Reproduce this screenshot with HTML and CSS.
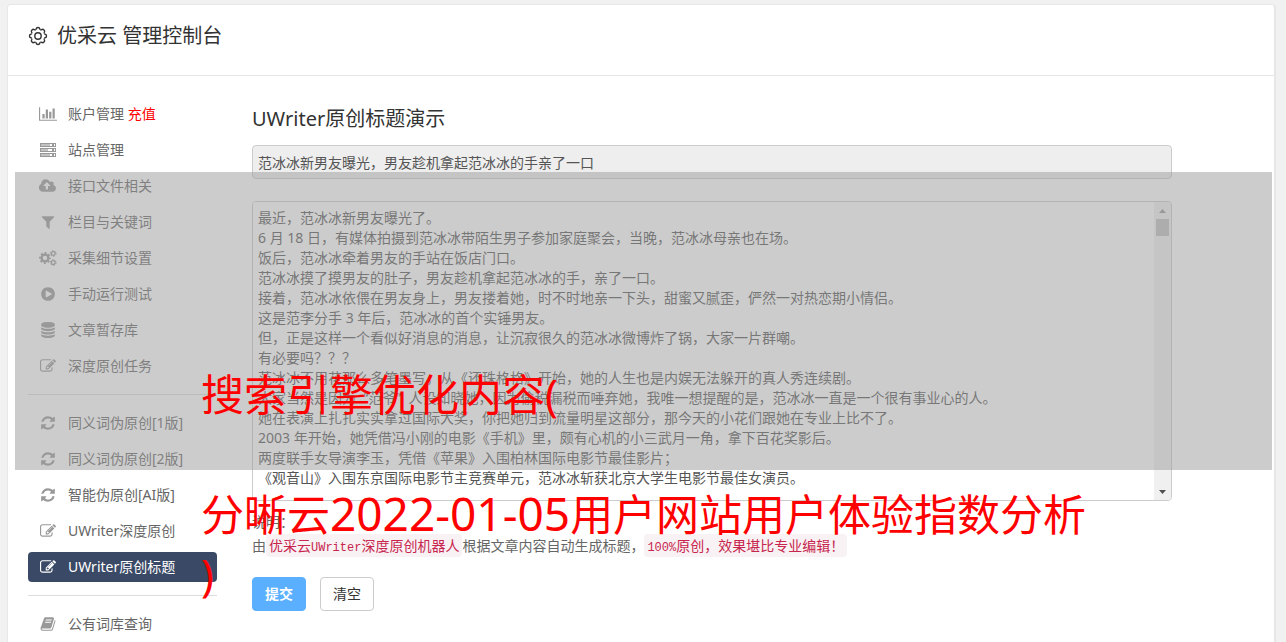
FILE: index.html
```html
<!DOCTYPE html>
<html lang="zh-CN">
<head>
<meta charset="utf-8">
<meta name="viewport" content="width=device-width, initial-scale=1">
<title>优采云 管理控制台</title>
<link rel="stylesheet" href="styles.css">
</head>
<body>
<svg class="symbols" aria-hidden="true">
  <symbol id="i-chart" viewBox="0 0 2048 1792"><path d="M640 896v512h-256v-512h256zm384-512v1024h-256v-1024h256zm1024 1152v128h-2048v-1536h128v1408h1920zm-640-896v768h-256v-768h256zm384-384v1152h-256v-1152h256z"/></symbol>
  <symbol id="i-server" viewBox="0 0 16 16"><g fill="none" stroke="currentColor"><rect x=".5" y="1.5" width="15" height="3"/><rect x=".5" y="6.5" width="15" height="3"/><rect x=".5" y="11.500" width="15" height="3"/></g><path opacity=".6" d="M1 2h9v2H1zM1 7h7v2H1zM1 12h9v2H1z"/><path d="M12 2h2v2h-2zM12 7h2v2h-2zM12 12h2v2h-2z"/></symbol>
  <symbol id="i-cloud" viewBox="0 0 1920 1792"><path d="M1216 864q0-14-9-23l-352-352q-9-9-23-9t-23 9l-351 351q-10 12-10 24 0 14 9 23t23 9h224v352q0 13 9.500 22.500t22.500 9.500h192q13 0 22.500-9.500t9.500-22.500v-352h224q13 0 22.500-9.500t9.500-22.500zm640 288q0 159-112.500 271.500t-271.500 112.500h-1088q-185 0-316.500-131.500t-131.500-316.500q0-130 70-240t188-165q-2-30-2-43 0-212 150-362t362-150q156 0 285.500 87t188.500 231q71-62 166-62 106 0 181 75t75 181q0 76-41 138 130 31 213.500 135.500t83.500 238.500z"/></symbol>
  <symbol id="i-filter" viewBox="0 0 1792 1792"><path d="M1595 295q17 41-14 70l-493 493v742q0 42-39 59-13 5-25 5-27 0-45-19l-256-256q-19-19-19-45v-486l-493-493q-31-29-14-70 17-39 59-39h1280q42 0 59 39z"/></symbol>
  <symbol id="i-cogs" viewBox="0 0 18 16"><g fill="none" stroke="currentColor"><circle cx="6" cy="8" r="3.400" stroke-width="2.400"/><circle cx="6" cy="8" r="5" stroke-width="1.800" stroke-dasharray="1.960" stroke-dashoffset=".98"/><circle cx="14.200" cy="3.500" r="1.900" stroke-width="1.300"/><circle cx="14.200" cy="3.500" r="2.900" stroke-width="1" stroke-dasharray="1.520"/><circle cx="14.200" cy="12.500" r="1.900" stroke-width="1.300"/><circle cx="14.200" cy="12.500" r="2.900" stroke-width="1" stroke-dasharray="1.520"/></g></symbol>
  <symbol id="i-play" viewBox="0 0 1792 1792"><path d="M896 128q209 0 385.500 103t279.500 279.500 103 385.500-103 385.500-279.500 279.500-385.500 103-385.500-103-279.500-279.500-103-385.500 103-385.500 279.500-279.500 385.500-103zm384 823q32-18 32-55t-32-55l-544-320q-31-19-64-1-32 19-32 56v640q0 37 32 56 16 8 32 8 17 0 32-9z"/></symbol>
  <symbol id="i-db" viewBox="0 0 1792 1792"><path d="M896 768q237 0 443-43t325-127v170q0 69-103 128t-280 93.500-385 34.500-385-34.500-280-93.500-103-128v-170q119 84 325 127t443 43zm0 768q237 0 443-43t325-127v170q0 69-103 128t-280 93.500-385 34.500-385-34.500-280-93.500-103-128v-170q119 84 325 127t443 43zm0-384q237 0 443-43t325-127v170q0 69-103 128t-280 93.500-385 34.500-385-34.500-280-93.500-103-128v-170q119 84 325 127t443 43zm0-1152q208 0 385 34.500t280 93.500 103 128v128q0 69-103 128t-280 93.500-385 34.500-385-34.500-280-93.500-103-128v-128q0-69 103-128t280-93.500 385-34.500z"/></symbol>
  <symbol id="i-edit" viewBox="0 0 1792 1792"><path d="M888 1184l116-116-152-152-116 116v56h96v96h56zm440-720q-16-16-33 1l-350 350q-17 17-1 33t33-1l350-350q17-17 1-33zm80 594v190q0 119-84.500 203.500t-203.500 84.500h-832q-119 0-203.500-84.500t-84.500-203.500v-832q0-119 84.500-203.500t203.500-84.500h832q63 0 117 25 15 7 18 23 3 17-9 29l-49 49q-14 14-32 8-23-6-45-6h-832q-66 0-113 47t-47 113v832q0 66 47 113t113 47h832q66 0 113-47t47-113v-126q0-13 9-22l64-64q15-15 35-7t20 29zm-96-738l288 288-672 672h-288v-288zm444 132l-92 92-288-288 92-92q28-28 68-28t68 28l152 152q28 28 28 68t-28 68z"/></symbol>
  <symbol id="i-refresh" viewBox="0 0 1792 1792"><path d="M1639 1056q0 5-1 7-64 268-268 434.500t-478 166.500q-146 0-282.500-55t-243.500-157l-129 129q-19 19-45 19t-45-19-19-45v-448q0-26 19-45t45-19h448q26 0 45 19t19 45-19 45l-137 137q71 66 161 102t187 36q134 0 250-65t186-179q11-17 53-117 8-23 30-23h192q13 0 22.500 9.500t9.500 22.500zm25-800v448q0 26-19 45t-45 19h-448q-26 0-45-19t-19-45 19-45l138-138q-148-137-349-137-134 0-250 65t-186 179q-11 17-53 117-8 23-30 23h-199q-13 0-22.500-9.500t-9.500-22.500v-7q65-268 270-434.500t480-166.500q146 0 284 55.500t245 156.500l130-129q19-19 45-19t45 19 19 45z"/></symbol>
  <symbol id="i-book" viewBox="0 0 1792 1792"><path d="M1703 478q40 57 18 129l-275 906q-19 64-76.500 107.500t-122.500 43.500h-923q-77 0-148.500-53.500t-99.500-131.500q-24-67-2-127 0-4 3-27t4-37q1-8-3-21.500t-3-19.500q2-11 8-21t16.500-23.500 16.500-23.500q23-38 45-91.500t30-91.500q3-10 .5-30t-.5-28q3-11 17-28t17-23q21-36 42-92t25-90q1-9-2.500-32t.5-28q4-13 22-30.500t22-22.500q19-26 42.500-84.500t27.500-96.500q1-8-3-25.500t-2-26.500q2-8 9-18t18-23 17-21q8-12 16.500-30.500t15-35 16-36 19.500-32 26.500-23.500 36-11.500 47.500 5.500l-1 3q38-9 51-9h761q74 0 114 56t18 130l-274 906q-36 119-71.500 153.500t-128.500 34.500h-869q-27 0-38 15-11 16-1 43 24 70 144 70h923q29 0 56-15.500t35-41.500l300-987q7-22 5-57 38 15 59 43zm-1064 2q-4 13 2 22.500t20 9.500h608q13 0 25.500-9.500t16.500-22.500l21-64q4-13-2-22.500t-20-9.500h-608q-13 0-25.500 9.500t-16.500 22.500zm-83 256q-4 13 2 22.500t20 9.500h608q13 0 25.500-9.500t16.500-22.500l21-64q4-13-2-22.500t-20-9.500h-608q-13 0-25.500 9.500t-16.500 22.500z"/></symbol>
</svg>

<div class="card">
  <header class="card-header">
    <svg class="gear" viewBox="-10 -10 20 20" aria-hidden="true">
      <g fill="none" stroke="currentColor" stroke-width="1.400">
        <path id="tooth" d="M-2.700-6.500Q-2-6.400-1.800-7.200Q-1.600-8.500 0-8.500Q1.600-8.500 1.800-7.200Q2-6.400 2.700-6.500"/>
        <use href="#tooth" transform="rotate(45)"/><use href="#tooth" transform="rotate(90)"/><use href="#tooth" transform="rotate(135)"/><use href="#tooth" transform="rotate(180)"/><use href="#tooth" transform="rotate(225)"/><use href="#tooth" transform="rotate(270)"/><use href="#tooth" transform="rotate(315)"/>
        <circle r="3.200"/>
      </g>
    </svg>
    <h1 class="title">优采云 管理控制台</h1>
  </header>

  <div class="columns">
    <nav class="sidebar" aria-label="管理菜单">
      <a class="item" href="#"><svg class="icon icon-wide"><use href="#i-chart"/></svg><span>账户管理 <span class="hot">充值</span></span></a>
      <a class="item" href="#"><svg class="icon"><use href="#i-server"/></svg>站点管理</a>
      <a class="item" href="#"><svg class="icon icon-wide"><use href="#i-cloud"/></svg>接口文件相关</a>
      <a class="item" href="#"><svg class="icon"><use href="#i-filter"/></svg>栏目与关键词</a>
      <a class="item" href="#"><svg class="icon icon-wide"><use href="#i-cogs"/></svg>采集细节设置</a>
      <a class="item" href="#"><svg class="icon"><use href="#i-play"/></svg>手动运行测试</a>
      <a class="item" href="#"><svg class="icon"><use href="#i-db"/></svg>文章暂存库</a>
      <a class="item" href="#"><svg class="icon"><use href="#i-edit"/></svg>深度原创任务</a>
      <hr class="divider">
      <a class="item" href="#"><svg class="icon"><use href="#i-refresh"/></svg>同义词伪原创[1版]</a>
      <a class="item" href="#"><svg class="icon"><use href="#i-refresh"/></svg>同义词伪原创[2版]</a>
      <a class="item" href="#"><svg class="icon"><use href="#i-refresh"/></svg>智能伪原创[AI版]</a>
      <a class="item" href="#"><svg class="icon"><use href="#i-edit"/></svg>UWriter深度原创</a>
      <a class="item active" href="#" aria-current="page"><svg class="icon"><use href="#i-edit"/></svg>UWriter原创标题</a>
      <hr class="divider">
      <a class="item" href="#"><svg class="icon"><use href="#i-book"/></svg>公有词库查询</a>
    </nav>

    <main class="main">
      <h2 class="title">UWriter原创标题演示</h2>
      <form class="form">
        <input class="field" type="text" aria-label="标题" readonly value="范冰冰新男友曝光，男友趁机拿起范冰冰的手亲了一口">
        <div class="editor">
          <textarea class="text" aria-label="文章内容" rows="14">最近，范冰冰新男友曝光了。
6 月 18 日，有媒体拍摄到范冰冰带陌生男子参加家庭聚会，当晚，范冰冰母亲也在场。
饭后，范冰冰牵着男友的手站在饭店门口。
范冰冰摸了摸男友的肚子，男友趁机拿起范冰冰的手，亲了一口。
接着，范冰冰依偎在男友身上，男友搂着她，时不时地亲一下头，甜蜜又腻歪，俨然一对热恋期小情侣。
这是范李分手 3 年后，范冰冰的首个实锤男友。
但，正是这样一个看似好消息的消息，让沉寂很久的范冰冰微博炸了锅，大家一片群嘲。
有必要吗？？？
范冰冰不用花那么多笔墨写，从《还珠格格》开始，她的人生也是内娱无法躲开的真人秀连续剧。
大家当然是因为  “范爷”  人设知晓她，因为偷税漏税而唾弃她，我唯一想提醒的是，范冰冰一直是一个很有事业心的人。
她在表演上扎扎实实拿过国际大奖，你把她归到流量明星这部分，那今天的小花们跟她在专业上比不了。
2003 年开始，她凭借冯小刚的电影《手机》里，颇有心机的小三武月一角，拿下百花奖影后。
两度联手女导演李玉，凭借《苹果》入围柏林国际电影节最佳影片；
《观音山》入围东京国际电影节主竞赛单元，范冰冰斩获北京大学生电影节最佳女演员。</textarea>
          <div class="scrollbar" aria-hidden="true">
            <svg class="arrow" viewBox="0 0 7 4"><path d="M0 4L3.500 0L7 4z"/></svg>
            <div class="thumb"></div>
            <svg class="arrow arrow-down" viewBox="0 0 7 4"><path d="M0 0L3.500 4L7 0z"/></svg>
          </div>
        </div>
        <div class="notes">
          <p>说明：</p>
          <p>由<code>优采云<span class="mono">UWriter</span>深度原创机器人</code>根据文章内容自动生成标题，<code><span class="mono">100%</span>原创，效果堪比专业编辑！</code></p>
        </div>
        <div class="actions">
          <button class="btn primary" type="button">提交</button>
          <button class="btn" type="button">清空</button>
        </div>
      </form>
    </main>
  </div>
</div>

<div class="band"></div>
<div class="caption">
  <p>搜索引擎优化内容(</p>
  <p class="second">分晰云<span class="date">2022-01-05</span>用户网站用户体验指数分析</p>
  <p>)</p>
</div>
</body>
</html>
```
FILE: styles.css
```css
* { box-sizing: border-box; }
html { height: 100%; overflow: hidden; }
body {
  position: relative;
  min-height: 100%;
  margin: 0;
  padding: 4px 10px 0 7px;
  background: #f1f1f1;
  color: #555;
  font: 14px/20px "Noto Sans", "Noto Sans CJK SC", sans-serif;
}
h1, h2, p { margin: 0; }
.symbols { position: absolute; width: 0; height: 0; }

.card {
  padding-bottom: 24px;
  background: #fff;
  border: 1px solid #e7e7e7;
  border-right-width: 2px;
  border-radius: 4px;
}
.card-header {
  display: flex;
  align-items: center;
  gap: 9px;
  height: 71px;
  padding: 0 20px 8px;
  border-bottom: 1px solid #e5e5e5;
}
.gear { width: 20px; height: 20px; color: #333; }
.title {
  color: #333;
  font-size: 20px;
  font-weight: 400;
  line-height: 28px;
}
.columns { display: flex; gap: 35px; padding: 23px 102px 0 20px; }

.sidebar {
  display: flex;
  flex: none;
  flex-direction: column;
  gap: 6px;
  width: 189px;
}
.item {
  display: flex;
  align-items: center;
  gap: 10px;
  height: 30px;
  padding: 0 10px;
  border-radius: 4px;
  color: #666;
  text-decoration: none;
  white-space: nowrap;
}
.icon { flex: none; width: 16px; height: 16px; margin: 0 2px; color: #999; fill: currentColor; }
.icon-wide { width: 18px; margin: 0 1px; }
.hot { color: #f00; }
.active { background: #3a4a66; color: #fff; }
.active .icon { color: #fff; }
.divider { width: 100%; height: 1px; margin: 7px 0; border: 0; background: #ddd; }

.main { flex: 1; min-width: 0; padding-top: 6px; }
.form { display: flex; flex-direction: column; margin-top: 12px; }
.field {
  width: 100%;
  height: 34px;
  padding: 0 5px;
  border: 1px solid #ccc;
  border-radius: 4px;
  background: #eee;
  color: #555;
  font: inherit;
}
.editor {
  display: flex;
  height: 300px;
  margin-top: 22px;
  border: 1px solid #ccc;
  border-radius: 4px;
  overflow: hidden;
}
.text {
  flex: 1;
  min-width: 0;
  padding: 6px 5px;
  border: 0;
  outline: 0;
  background: #fff;
  color: #555;
  font: inherit;
  resize: none;
  overflow: hidden;
}
.scrollbar {
  display: flex;
  flex: none;
  flex-direction: column;
  align-items: center;
  gap: 6px;
  width: 17px;
  padding: 7px 0 6px;
  background: #f0f0f0;
}
.arrow { width: 7px; height: 4px; fill: #505050; }
.arrow:first-child { fill: #999; }
.arrow-down { margin-top: auto; }
.thumb { width: 13px; height: 17px; background: #c1c1c1; }

.notes { margin-top: 9px; line-height: 24px; color: #666; }
code {
  padding: 2px 3px;
  border-radius: 4px;
  background: #f9f2f4;
  color: #c7254e;
  font: inherit;
}
.mono { font: 12px "Liberation Mono", monospace; }
.actions { display: flex; gap: 14px; margin-top: 19px; }
.btn {
  width: 54px;
  height: 34px;
  padding: 0;
  border: 1px solid #ccc;
  border-radius: 4px;
  background: #fff;
  color: #333;
  font: inherit;
}
.primary { border-color: #5aafff; background: #5aafff; color: #fff; font-weight: 700; }

/* Translucent band and caption laid over the panel */
.band {
  position: absolute;
  top: 172px;
  right: 14px;
  left: 15px;
  height: 298px;
  background: rgba(153, 153, 153, .5);
}
.caption {
  position: absolute;
  top: 365px;
  left: 201px;
  color: #f00;
  font-size: 43px;
  line-height: 60px;
  white-space: nowrap;
}
.second { margin-top: 60px; }
.date { font-size: 46px; line-height: 1; }
```
